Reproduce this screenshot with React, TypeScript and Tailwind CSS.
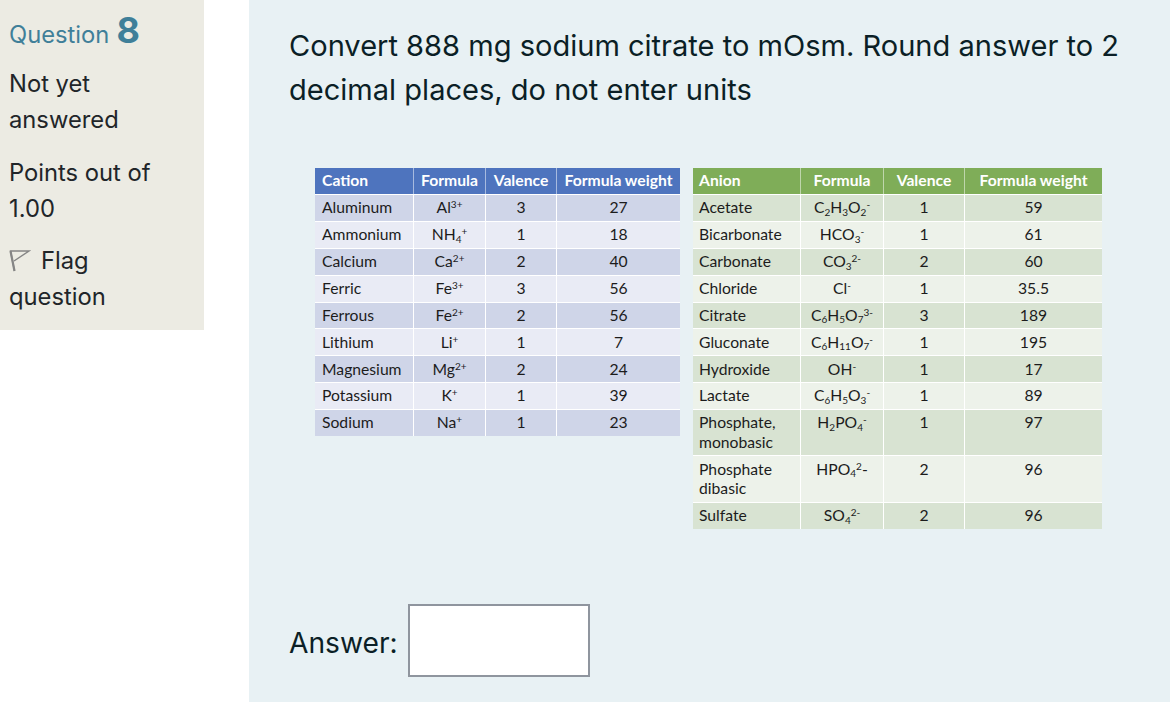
const cations: [string, React.ReactNode, string, string][] = [
  ["Aluminum", <>Al<sup>3+</sup></>, "3", "27"],
  ["Ammonium", <>NH<sub>4</sub><sup>+</sup></>, "1", "18"],
  ["Calcium", <>Ca<sup>2+</sup></>, "2", "40"],
  ["Ferric", <>Fe<sup>3+</sup></>, "3", "56"],
  ["Ferrous", <>Fe<sup>2+</sup></>, "2", "56"],
  ["Lithium", <>Li<sup>+</sup></>, "1", "7"],
  ["Magnesium", <>Mg<sup>2+</sup></>, "2", "24"],
  ["Potassium", <>K<sup>+</sup></>, "1", "39"],
  ["Sodium", <>Na<sup>+</sup></>, "1", "23"],
];

const anions: [React.ReactNode, React.ReactNode, string, string][] = [
  ["Acetate", <>C<sub>2</sub>H<sub>3</sub>O<sub>2</sub><sup>-</sup></>, "1", "59"],
  ["Bicarbonate", <>HCO<sub>3</sub><sup>-</sup></>, "1", "61"],
  ["Carbonate", <>CO<sub>3</sub><sup>2-</sup></>, "2", "60"],
  ["Chloride", <>Cl<sup>-</sup></>, "1", "35.5"],
  ["Citrate", <>C<sub>6</sub>H<sub>5</sub>O<sub>7</sub><sup>3-</sup></>, "3", "189"],
  ["Gluconate", <>C<sub>6</sub>H<sub>11</sub>O<sub>7</sub><sup>-</sup></>, "1", "195"],
  ["Hydroxide", <>OH<sup>-</sup></>, "1", "17"],
  ["Lactate", <>C<sub>6</sub>H<sub>5</sub>O<sub>3</sub><sup>-</sup></>, "1", "89"],
  [<>Phosphate,<br />monobasic</>, <>H<sub>2</sub>PO<sub>4</sub><sup>-</sup></>, "1", "97"],
  [<>Phosphate<br />dibasic</>, <>HPO<sub>4</sub><sup>2</sup>-</>, "2", "96"],
  ["Sulfate", <>SO<sub>4</sub><sup>2-</sup></>, "2", "96"],
];

function IonTable({
  cols,
  headers,
  rows,
  headClass,
  oddClass,
  evenClass,
  namePad,
}: {
  cols: string;
  headers: string[];
  rows: [React.ReactNode, React.ReactNode, string, string][];
  headClass: string;
  oddClass: string;
  evenClass: string;
  namePad: string;
}) {
  return (
    <div
      className={`grid self-start text-[15.7px] leading-[19.5px] text-[#1c1c1c] font-['Lato',sans-serif] [&_sub]:text-[10px] [&_sup]:text-[10px] ${cols}`}
    >
      <div className={`grid grid-cols-subgrid col-span-4 h-[26px] items-center font-bold text-white ${headClass}`}>
        {headers.map((h, i) => (
          <div key={h} className={`border-r border-[#ffffff80] last:border-r-0 h-full pb-px flex items-center ${i === 0 ? namePad : "justify-center"}`}>
            {h}
          </div>
        ))}
      </div>
      {rows.map((row, r) => (
        <div
          key={r}
          className={`grid grid-cols-subgrid col-span-4 border-t border-white ${r % 2 === 0 ? oddClass : evenClass}`}
        >
          {row.map((cell, i) => (
            <div
              key={i}
              className={`border-r border-white last:border-r-0 pt-[3.25px] pb-[3.125px] ${i === 0 ? namePad : "text-center"}`}
            >
              {cell}
            </div>
          ))}
        </div>
      ))}
    </div>
  );
}

export default function App() {
  return (
    <div className="flex h-[702px] w-[1170px] overflow-hidden bg-white font-['Inter',sans-serif] text-[#212529]">
      <aside className="h-[330px] w-[204px] shrink-0 bg-[#ecebe3] pl-[9px] pr-[30px] pt-[12px] text-[23.75px] leading-[36px]">
        <h3 className="flex h-[44px] items-baseline gap-[7px] text-[#3f7f99]">
          <span className="text-[23.75px]">Question</span>
          <span className="text-[36px] font-bold">8</span>
        </h3>
        <p className="mt-[10px]">Not yet answered</p>
        <p className="mt-[17px]">Points out of 1.00</p>
        <p className="mt-[16px]">
          <svg viewBox="0 0 22 24" className="mr-[10px] inline-block h-[24px] w-[22px] align-[-4px]" fill="none">
            <path d="M5.5 22 1.5 2H20L5 12" stroke="#858585" strokeWidth="1.4" />
            <path d="M5.5 22 1.5 2" stroke="#858585" strokeWidth="2.2" />
          </svg>
          Flag question
        </p>
      </aside>

      <main className="ml-[45px] flex h-[702px] flex-1 flex-col bg-[#e8f1f4] pl-[40px] text-[#0b1f26]">
        <p className="mt-[24px] w-[860px] text-[29.05px] leading-[44px]">
          Convert 888 mg sodium citrate to mOsm. Round answer to 2 decimal places, do not enter units
        </p>

        <div className="ml-[26px] mt-[56px] flex h-[361px] gap-[13px]">
          <IonTable
            cols="grid-cols-[99px_72px_71px_123px]"
            headers={["Cation", "Formula", "Valence", "Formula weight"]}
            rows={cations}
            headClass="bg-[#4e74be]"
            oddClass="bg-[#cfd5e8]"
            evenClass="bg-[#e9ebf5]"
            namePad="pl-[7px]"
          />
          <IonTable
            cols="grid-cols-[108px_83px_81px_137px]"
            headers={["Anion", "Formula", "Valence", "Formula weight"]}
            rows={anions}
            headClass="bg-[#7fad58]"
            oddClass="bg-[#d8e3d2]"
            evenClass="bg-[#edf2ea]"
            namePad="pl-[6px]"
          />
        </div>

        <div className="mt-[75px] flex items-center gap-[10px]">
          <label className="pt-[6px] text-[28.2px]">Answer:</label>
          <input type="text" className="h-[73px] w-[182px] border-2 border-[#8f959e] bg-white" />
        </div>
      </main>
    </div>
  );
}
